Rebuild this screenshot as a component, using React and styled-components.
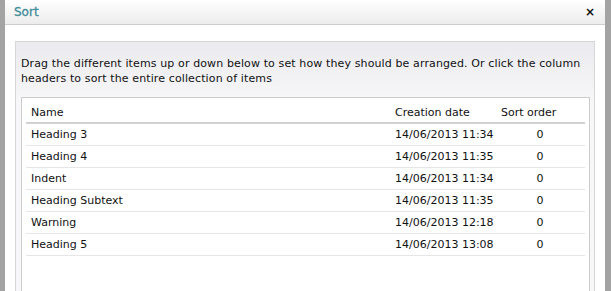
import React from "react";
import styled, { createGlobalStyle } from "styled-components";

const Global = createGlobalStyle`
  html, body { margin: 0; padding: 0; }
  body { font-family: "DejaVu Sans", Verdana, sans-serif; font-size: 11px; color: #111; }
`;

const Page = styled.div`
  width: 611px;
  height: 291px;
  box-sizing: border-box;
  background: #a3a3a3;
  padding: 0 6px 0 5px;
  display: flex;
  overflow: hidden;
`;

const Dialog = styled.div`
  flex: 1;
  background: #fff;
  display: flex;
  flex-direction: column;
`;

const TitleBar = styled.div`
  height: 24px;
  flex: none;
  border-bottom: 1px solid #cdcdcd;
  background: linear-gradient(#ffffff, #ececec);
  display: flex;
  align-items: center;
  justify-content: space-between;
  padding: 0 10px 0 9px;
`;

const Title = styled.span`
  color: #3f8c99;
  font-weight: normal;
  font-size: 12px;
  -webkit-text-stroke: 0.3px #3f8c99;
`;

const Close = styled.span`
  font-weight: bold;
  font-size: 12px;
  color: #111;
`;

const Body = styled.div`
  flex: 1;
  padding: 16px 10px 0 10px;
  display: flex;
  min-height: 0;
`;

const Panel = styled.div`
  flex: 1;
  border: 1px solid #d6d6d6;
  border-bottom: none;
  background: linear-gradient(#ebebef, #f7f7f9 60px, #f7f7f9);
  padding: 14px 4px 0 5px;
  display: flex;
  flex-direction: column;
`;

const Intro = styled.p`
  margin: 0 0 11px 0;
  line-height: 15px;
  letter-spacing: 0.12px;
`;

const TableBox = styled.div`
  flex: 1;
  background: #fff;
  border: 1px solid #cccccc;
  border-bottom: none;
  padding: 0 4px;
`;

const Row = styled.div`
  display: grid;
  grid-template-columns: 364px 106px 1fr;
  height: 21px;
  align-items: center;
  border-bottom: ${(p) => (p.$head ? "2px solid #d2d2d2" : "1px solid #e6e6e6")};
  padding-left: 5px;
  ${(p) => p.$head && "align-items: end; padding-bottom: 3px;"}
`;

const Cell = styled.span`
  text-align: ${(p) => (p.$center ? "center" : "left")};
  white-space: nowrap;
  ${(p) => p.$center && "width: 78px;"}
`;

const rows = [
  ["Heading 3", "14/06/2013 11:34"],
  ["Heading 4", "14/06/2013 11:35"],
  ["Indent", "14/06/2013 11:34"],
  ["Heading Subtext", "14/06/2013 11:35"],
  ["Warning", "14/06/2013 12:18"],
  ["Heading 5", "14/06/2013 13:08"],
];

export default function App() {
  return (
    <>
      <Global />
      <Page>
        <Dialog>
          <TitleBar>
            <Title>Sort</Title>
            <Close>×</Close>
          </TitleBar>
          <Body>
            <Panel>
              <Intro>
                Drag the different items up or down below to set how they should be arranged. Or click the column headers to sort the entire collection of items
              </Intro>
              <TableBox>
                <Row $head>
                  <Cell>Name</Cell>
                  <Cell>Creation date</Cell>
                  <Cell>Sort order</Cell>
                </Row>
                {rows.map(([n, d]) => (
                  <Row key={n}>
                    <Cell>{n}</Cell>
                    <Cell>{d}</Cell>
                    <Cell $center>0</Cell>
                  </Row>
                ))}
              </TableBox>
            </Panel>
          </Body>
        </Dialog>
      </Page>
    </>
  );
}
